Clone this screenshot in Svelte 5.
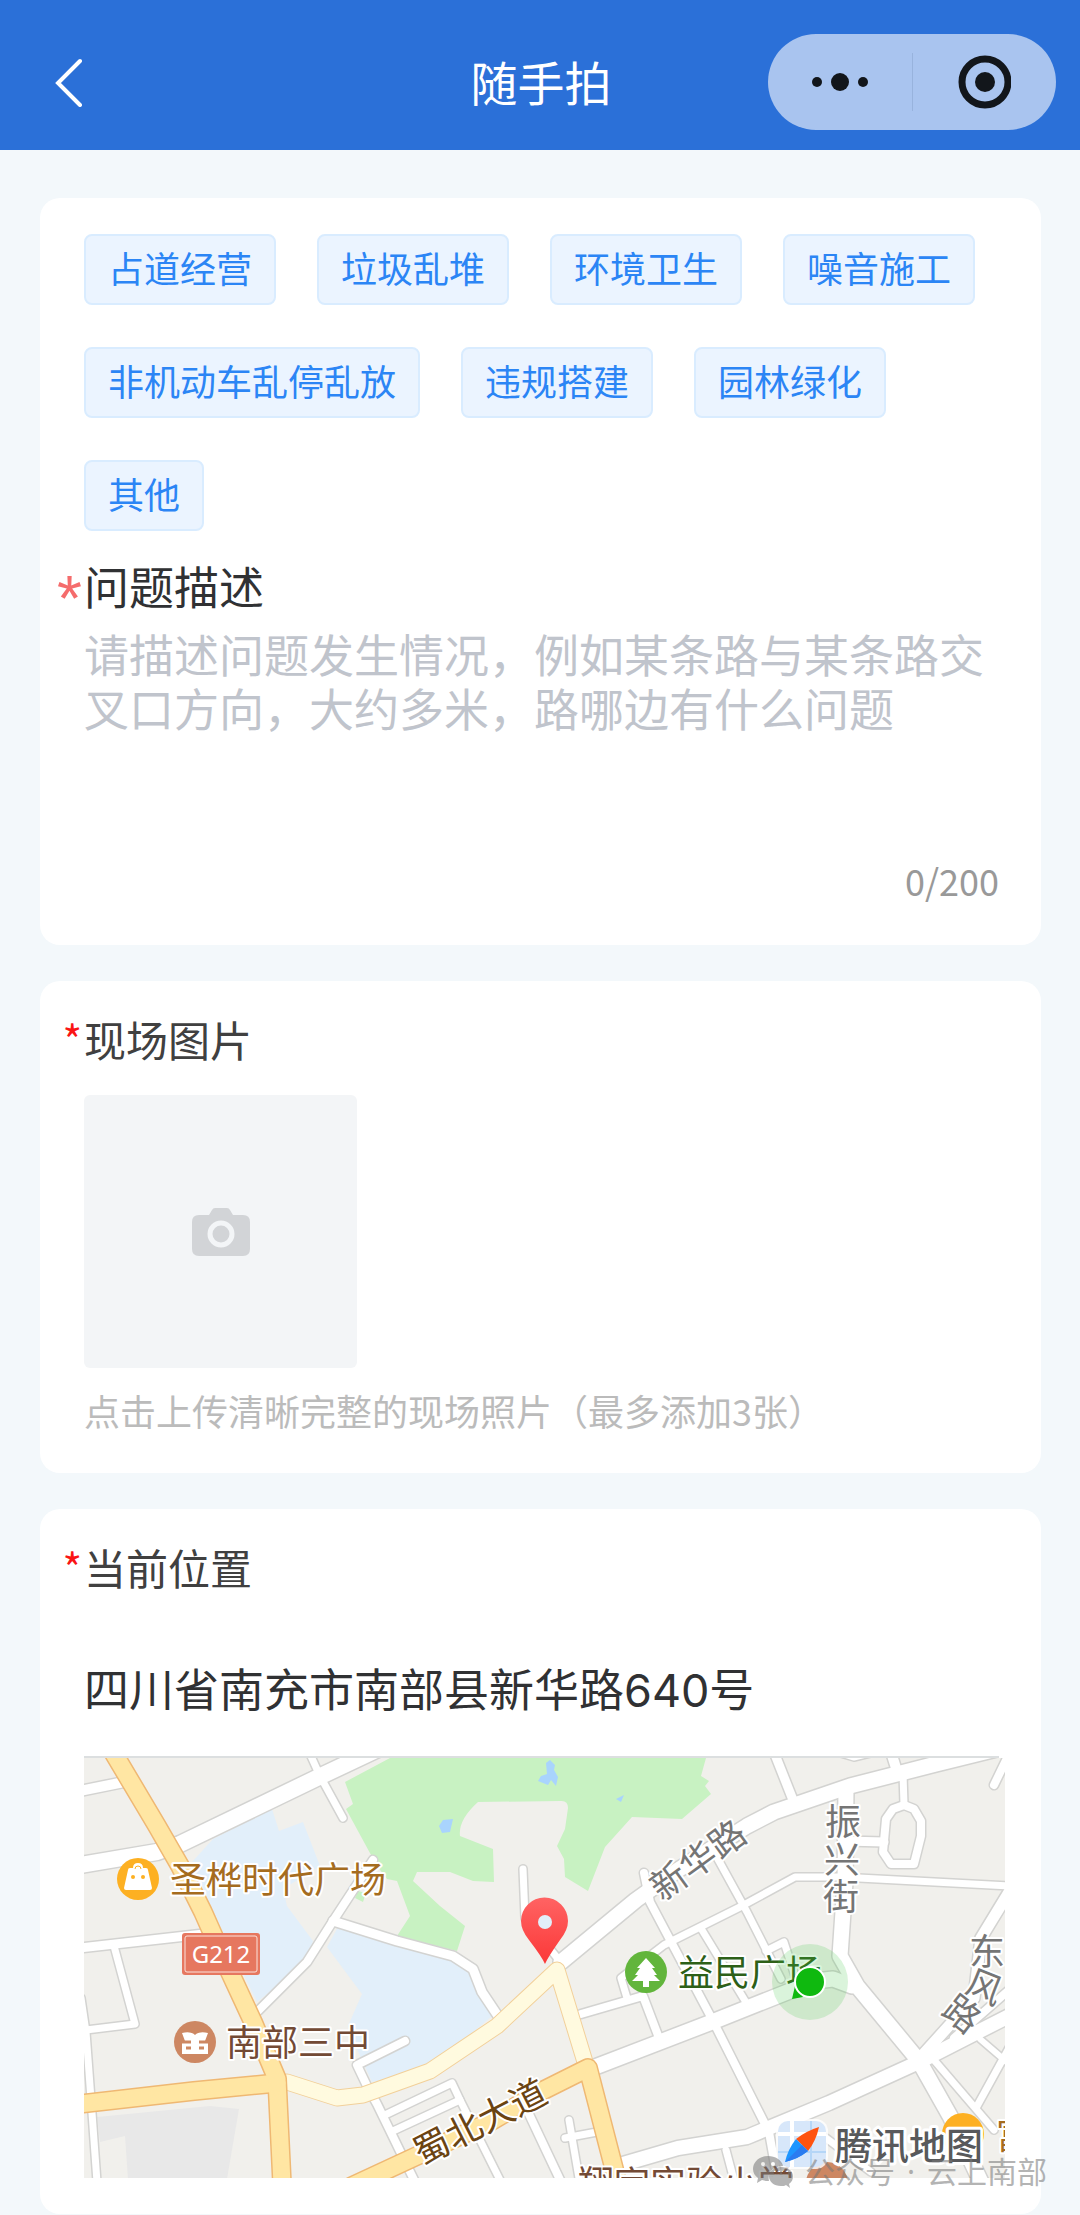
<script lang="ts">
  const tags = ['占道经营', '垃圾乱堆', '环境卫生', '噪音施工', '非机动车乱停乱放', '违规搭建', '园林绿化', '其他'];
  const maxLength = 200;
  const address = '四川省南充市南部县新华路640号';

  let selected = $state('');
  let description = $state('');

  // Minor roads: path and width
  const roads = [
    { d: 'M-4 107 L73 94 L96 86 L239 17 L292 -8', w: 16 },
    { d: 'M226 -4 L236 18 L259 60', w: 7 },
    { d: 'M-4 33 L40 24', w: 10 },
    { d: 'M-4 190 L120 176', w: 9 },
    { d: 'M30 188 L51 266 L2 272', w: 7 },
    { d: 'M-3 240 L2 274 L7 341 L13 424', w: 7 },
    { d: 'M289 102 L249 163 L223 204 L174 253', w: 8 },
    { d: 'M249 163 L313 183 L369 198 L389 211 L398 234 L414 258', w: 9 },
    { d: 'M439 111 L441 160 L475 202', w: 7 },
    { d: 'M321 283 L273 307 L283 328 L293 346 L332 426', w: 8 },
    { d: 'M303 356 L368 325 L376 342 L418 426', w: 7 },
    { d: 'M309 373 L376 342', w: 7 },
    { d: 'M444 354 L478 426', w: 8 },
    { d: 'M477 204 L552 142 L594 112 L663 68 L690 54 L766 28 L852 6 L925 -12', w: 15 },
    { d: 'M690 -6 L709 42', w: 9 },
    { d: 'M750 -6 L770 0 L795 -6', w: 5 },
    { d: 'M762 30 L761 124 L756 198 L773 228 L835 303 L866 358 L897 424', w: 15 },
    { d: 'M807 -6 L812 10', w: 10 },
    { d: 'M819 16 L820 46', w: 7 },
    { d: 'M809 51 L820 47 L830 51 L837 63 L837 78 L830 106 L807 106 L799 94 L802 61 Z', w: 8 },
    { d: 'M762 83 L800 84', w: 9 },
    { d: 'M925 -4 L910 27', w: 8 },
    { d: 'M543 240 L537 220 L580 187 L656 149 L711 119 L756 119 L925 128', w: 7 },
    { d: 'M560 115 L566 144 L628 261 L685 374 L694 424', w: 8 },
    { d: 'M630 94 L663 154 L697 221', w: 7 },
    { d: 'M682 193 L700 184 L711 218', w: 7 },
    { d: 'M618 172 L663 246', w: 7 },
    { d: 'M497 256 L559 238 L575 280', w: 8 },
    { d: 'M511 309 L628 264 L731 223 L749 221 L768 228', w: 15 },
    { d: 'M539 406 L594 390 L663 379 L745 345 L835 304 L925 258', w: 14 },
    { d: 'M925 134 L897 180 L890 240 L835 301', w: 11 },
    { d: 'M850 302 L910 372', w: 7 },
    { d: 'M925 290 L892 350', w: 7 },
    { d: 'M896 281 L925 306', w: 6 },
    { d: 'M925 232 L870 280', w: 8 },
    { d: 'M485 362 L496 426', w: 7 },
    { d: 'M481 380 L513 374', w: 7 },
    { d: 'M642 392 L651 426', w: 7 },
    { d: 'M742 380 L787 414', w: 7 }
  ];

  const avenues = ['M203 324 L253 340 L279 337 L346 313 L413 268 L473 212 L501 304'];

  const highways = [
    'M-4 346 L110 333 L193 325',
    'M29 -6 L73 68 L96 108 L119 154 L143 208 L169 264 L193 321 L198 426',
    'M268 428 L406 364 L456 334 L504 310 L534 426'
  ];
</script>

<div class="page">
  <header class="navbar">
    <button class="back" aria-label="返回">
      <svg viewBox="0 0 30 50" width="30" height="50">
        <path d="M26 4 L4 26 L26 48" fill="none" stroke="#fff" stroke-width="4" stroke-linecap="round" />
      </svg>
    </button>
    <h1>随手拍</h1>
    <div class="capsule">
      <button aria-label="更多">
        <svg viewBox="0 0 58 20" width="58" height="20" fill="#12161b">
          <circle cx="6" cy="10" r="5" />
          <circle cx="29" cy="10" r="9" />
          <circle cx="52" cy="10" r="5" />
        </svg>
      </button>
      <button aria-label="关闭">
        <svg viewBox="0 0 54 54" width="54" height="54">
          <circle cx="28" cy="27" r="23" fill="none" stroke="#12161b" stroke-width="7" />
          <circle cx="28" cy="27" r="10" fill="#12161b" />
        </svg>
      </button>
    </div>
  </header>

  <main>
    <section class="card first">
      <div class="tags">
        {#each tags as tag}
          <button class="tag" class:active={selected === tag} onclick={() => (selected = tag)}>{tag}</button>
        {/each}
      </div>
      <label class="title large" for="description"><span class="star soft">*</span>问题描述</label>
      <textarea
        id="description"
        maxlength={maxLength}
        placeholder="请描述问题发生情况，例如某条路与某条路交叉口方向，大约多米，路哪边有什么问题"
        bind:value={description}
      ></textarea>
      <div class="counter">{description.length}/{maxLength}</div>
    </section>

    <section class="card">
      <h2 class="title"><span class="star">*</span>现场图片</h2>
      <button class="upload" aria-label="上传照片">
        <svg viewBox="0 0 58 48" width="58" height="48">
          <path
            fill="#d2d4d7"
            d="M17 7 L20 2 Q21 0 23 0 H35 Q37 0 38 2 L41 7 H51 Q58 7 58 14 V41 Q58 48 51 48 H7 Q0 48 0 41 V14 Q0 7 7 7 Z"
          />
          <circle cx="29" cy="26" r="11" fill="none" stroke="#f3f5f7" stroke-width="5" />
        </svg>
      </button>
      <p class="hint">点击上传清晰完整的现场照片（最多添加3张）</p>
    </section>

    <section class="card">
      <h2 class="title"><span class="star">*</span>当前位置</h2>
      <p class="address">{address}</p>
      <svg class="map" viewBox="0 0 921 420" preserveAspectRatio="xMidYMid slice" role="img" aria-label="地图">
        <defs>
          <linearGradient id="pin" x1="0" y1="0" x2="0" y2="1">
            <stop offset="0" stop-color="#ff6363" />
            <stop offset="1" stop-color="#fb3838" />
          </linearGradient>
        </defs>
        <rect width="921" height="420" fill="#f1f0ec" />

        <!-- blocks, parks, ponds -->
        <path fill="#e2effa" d="M188 51 L195 73 L219 64 L236 108 L199 131 L203 148 L229 183 L223 204 L173 244 L123 141 L108 104 L129 81 Z" />
        <path fill="#e2effa" d="M254 169 L313 184 L379 204 L396 238 L408 258 L346 311 L288 324 L273 291 L264 268 L278 236 L243 189 Z" />
        <path fill="#e8e8e8" d="M13 359 L126 348 L155 351 L143 421 L44 421 L41 378 L16 384 Z" />
        <path
          fill="#c8f2c2"
          d="M306 0 L261 24 L269 46 L262 51 L293 108 L303 121 L313 123 L326 158 L313 178 L373 193 L381 168 L356 148 L329 123 L333 114 L366 114 L389 123 L410 124 L409 91 L376 78 Q374 62 394 44 L476 43 Q484 42 484 50 L481 71 L473 88 L480 101 L481 119 L504 133 L521 89 L548 59 L598 61 L627 36 L621 28 L625 23 L617 18 L622 0 Z"
        />
        <path fill="#c8f2c2" d="M274 133 L282 135 L279 144 L271 140 Z" />
        <path fill="#a9d4fd" d="M462 5 L466 2 L471 7 L470 12 L474 19 L472 28 L467 22 L464 27 L454 23 L457 18 L463 16 Z" />
        <path fill="#a9d4fd" d="M359 62 L369 61 L366 74 L358 75 L355 68 Z" />
        <path fill="#a9d4fd" d="M532 41 L540 37 L537 44 Z" />

        <g fill="none" stroke-linejoin="round" stroke-linecap="round">
          {#each roads as road}
            <path d={road.d} stroke="#d3d3d1" stroke-width={road.w + 3} />
          {/each}
          {#each roads as road}
            <path d={road.d} stroke="#fff" stroke-width={road.w} />
          {/each}
          {#each avenues as d}
            <path {d} stroke="#f2d09a" stroke-width="17" />
            <path {d} stroke="#fffadf" stroke-width="15" />
          {/each}
          {#each highways as d}
            <path {d} stroke="#efb873" stroke-width="20" />
          {/each}
          {#each highways as d}
            <path {d} stroke="#ffe6a3" stroke-width="17" />
          {/each}
        </g>

        <!-- places -->
        <circle cx="54" cy="121" r="21" fill="#fdb022" />
        <path fill="#fff" d="M44 112 Q44 110 46 110 H49 Q49 105 54 105 Q59 105 59 110 H62 Q64 110 64 112 L68 130 Q68 132 66 132 H42 Q40 132 40 130 Z" />
        <path d="M51 111 Q51 108 54 108 Q57 108 57 111" fill="none" stroke="#fdb022" />
        <circle cx="49" cy="119" r="2" fill="#fdb022" />
        <circle cx="59" cy="119" r="2" fill="#fdb022" />
        <circle cx="111" cy="284" r="21" fill="#cd8762" />
        <path fill="#fff" d="M98 275 Q107 273 111 277 Q115 273 124 275 L121 283 H124 V296 H98 V283 H101 Z" />
        <path d="M98 284 H107 M115 284 H124 M102 290 H107 M115 290 H120" stroke="#cd8762" stroke-width="3" />
        <circle cx="562" cy="214" r="21" fill="#62b53c" />
        <path fill="#fff" d="M562 200 L571 210 H568 L573 217 H570 L576 223 H565 V229 H559 V223 H548 L554 217 H551 L556 210 H553 Z" />
        <circle cx="879" cy="376" r="21" fill="#fdb022" />
        <circle cx="743" cy="425" r="21" fill="#cd8762" />

        <rect x="98" y="175" width="78" height="42" rx="3" fill="#e6775f" />
        <rect x="101" y="178" width="72" height="36" rx="2" fill="none" stroke="#fbe3dc" stroke-width="1" />
        <text class="shield" x="137" y="205">G212</text>

        <g class="labels">
          <text x="86" y="135" fill="#a56c1f">圣桦时代广场</text>
          <text x="142" y="298" fill="#734a35">南部三中</text>
          <text x="594" y="228" fill="#2d6018">益民广场</text>
          <text x="494" y="439" fill="#734a35">翔宇实验小学</text>
          <text x="912" y="391" fill="#a56c1f">富</text>
          <g text-anchor="middle">
            <text transform="translate(396 364) rotate(-27)" y="13" fill="#6b4412">蜀北大道</text>
            <g fill="#757575">
              <text transform="translate(614 102) rotate(-36)" y="13">新华路</text>
              <text x="759" y="77">振</text>
              <text x="758" y="115">兴</text>
              <text x="757" y="152">街</text>
              <text x="903" y="207">东</text>
              <text transform="translate(900 229) rotate(22)" y="13">风</text>
              <text transform="translate(878 256) rotate(38)" y="13">路</text>
            </g>
          </g>
        </g>

        <!-- current position -->
        <circle cx="726" cy="224" r="38" fill="#45c94a" fill-opacity="0.2" />
        <path d="M711 228 L708 241 L719 239 Z" fill="#0fb90f" />
        <circle cx="726" cy="224" r="15" fill="#0fb90f" stroke="#fff" stroke-width="2" />

        <path
          d="M461 206 Q458 199 445 182 Q437 172 437 163 A23 23 0 0 1 484 163 Q484 172 476 182 Q464 199 461 206 Z"
          fill="url(#pin)"
        />
        <circle cx="461" cy="164" r="7" fill="#e2effa" />

        <!-- map provider -->
        <rect x="692" y="361" width="52" height="50" rx="12" fill="#fff" fill-opacity="0.8" />
        <rect x="694" y="363" width="48" height="46" rx="10" fill="#d7e7fa" />
        <path d="M708 363 V409 M694 376 H742" stroke="#fff" stroke-width="4" />
        <path d="M727 363 V409 M694 394 H742" stroke="#b5d6f7" stroke-width="2" />
        <path d="M735 369 Q722 373 712 381 L724 393 Q732 383 735 369 Z" fill="#ff5310" />
        <path d="M701 404 Q704 391 712 381 L724 393 Q714 401 701 404 Z" fill="#1e96ff" />
        <path d="M718 387 L724 393 Q714 401 701 404 Z" fill="#2b7cf0" />
        <text class="brand" x="751" y="402">腾讯地图</text>
      </svg>
    </section>
  </main>

  <div class="watermark">
    <svg viewBox="0 0 40 32" width="40" height="32">
      <path
        fill="#777"
        fill-rule="evenodd"
        d="M15 0 C6 0 0 6 0 13 C0 17 2 20 5 22 L4 27 L9 24 C12 25 14 25 16 25 C14 17 20 10 30 10 C29 4 22 0 15 0 Z M10 6 A2 2 0 1 1 10 10 A2 2 0 1 1 10 6 Z M20 6 A2 2 0 1 1 20 10 A2 2 0 1 1 20 6 Z"
      />
      <path
        fill="#777"
        fill-rule="evenodd"
        d="M28 11 C21 11 16 15 16 20 C16 26 21 30 28 30 C30 30 32 30 33 29 L37 32 L36 28 C39 26 40 23 40 20 C40 15 35 11 28 11 Z M24 15 A2 2 0 1 1 24 18 A2 2 0 1 1 24 15 Z M32 15 A2 2 0 1 1 32 18 A2 2 0 1 1 32 15 Z"
      />
    </svg>
    <span>公众号</span>
    <span>·</span>
    <span>云上南部</span>
  </div>
</div>

<style>
  :global(body) {
    margin: 0;
    background: #f3f8fb;
  }

  .page {
    position: relative;
    font-family: "Noto Sans CJK SC", "Noto Sans", sans-serif;
    color: #303133;
    overflow: hidden;
  }

  button {
    padding: 0;
    border: 0;
    background: none;
    font-family: inherit;
    cursor: pointer;
  }

  button svg {
    display: block;
  }

  .navbar {
    display: grid;
    grid-template-columns: 1fr auto 1fr;
    align-items: center;
    height: 136px;
    padding: 14px 24px 0 54px;
    background: #2b70d8;
  }

  .back {
    justify-self: start;
  }

  h1 {
    margin: 0 28px 0 0;
    padding-bottom: 2px;
    color: #fff;
    font-size: 47px;
    font-weight: 400;
    line-height: 72px;
  }

  .capsule {
    display: flex;
    justify-self: end;
    width: 288px;
    height: 96px;
    border-radius: 48px;
    background: #a9c4ef;
  }

  .capsule button {
    display: flex;
    flex: 1;
    align-items: center;
    justify-content: center;
  }

  .capsule button + button {
    position: relative;
  }

  .capsule button + button::before {
    content: "";
    position: absolute;
    left: 0;
    width: 1px;
    height: 58px;
    background: #98b3dd;
  }

  main {
    display: flex;
    flex-direction: column;
    gap: 36px;
    padding: 48px 39px 0 40px;
  }

  .card {
    padding: 31px 36px 36px 44px;
    border-radius: 20px;
    background: #fff;
  }

  .card.first {
    padding-top: 36px;
  }

  .tags {
    display: flex;
    flex-wrap: wrap;
    gap: 42px 41px;
    margin-bottom: 28px;
  }

  .tag {
    padding: 0 22px 4px;
    border: 2px solid #d9ecff;
    border-radius: 8px;
    background: #ebf4ff;
    color: #2b85f5;
    font-size: 36px;
    line-height: 63px;
  }

  .tag.active {
    border-color: #2b85f5;
  }

  .title {
    display: flex;
    margin: 0 0 29px -44px;
    color: #404040;
    font-size: 42px;
    font-weight: 400;
    line-height: 54px;
  }

  .title.large {
    margin-bottom: 14px;
    color: #303133;
    font-size: 45px;
  }

  .star {
    width: 42px;
    margin-right: 2px;
    color: #fa1414;
    text-align: right;
  }

  .star.soft {
    height: 54px;
    color: #f56c6c;
    font-family: "Liberation Sans", sans-serif;
    font-size: 64px;
    line-height: 80px;
  }

  textarea {
    display: block;
    box-sizing: border-box;
    width: 100%;
    height: 228px;
    padding: 0;
    border: 0;
    outline: 0;
    resize: none;
    background: none;
    color: #303133;
    font-family: inherit;
    font-size: 45px;
    line-height: 54px;
  }

  textarea::placeholder {
    color: #c0c4cc;
    opacity: 1;
  }

  .counter {
    margin-right: 6px;
    padding-bottom: 4px;
    color: #999;
    font-size: 36px;
    line-height: 50px;
    text-align: right;
  }

  .upload {
    display: flex;
    align-items: center;
    justify-content: center;
    width: 273px;
    height: 273px;
    border-radius: 6px;
    background: #f3f5f7;
  }

  .hint {
    margin: 17px 0 2px;
    color: #bbb;
    font-size: 36px;
    line-height: 50px;
  }

  .address {
    margin: 70px 6px 0 0;
    padding-bottom: 38px;
    border-bottom: 2px solid #dcdfe0;
    font-family: Inter, "Noto Sans CJK SC", sans-serif;
    font-size: 45px;
    line-height: 54px;
  }

  .map {
    display: block;
    width: 100%;
    height: 420px;
  }

  .labels text {
    font-size: 36px;
    paint-order: stroke;
    stroke: #fff;
    stroke-width: 4px;
    stroke-linejoin: round;
  }

  .shield {
    fill: #fff;
    font-family: "Noto Sans", sans-serif;
    font-size: 24px;
    text-anchor: middle;
  }

  .brand {
    fill: #58595b;
    font-size: 37px;
    font-weight: 500;
    paint-order: stroke;
    stroke: #fff;
    stroke-width: 6px;
    stroke-linejoin: round;
  }

  .watermark {
    position: absolute;
    right: 33px;
    bottom: 22px;
    display: flex;
    align-items: center;
    gap: 12px;
    color: #777;
    font-family: "Noto Sans", "Noto Sans CJK SC", sans-serif;
    font-size: 30px;
    line-height: 40px;
    opacity: 0.55;
  }
</style>
